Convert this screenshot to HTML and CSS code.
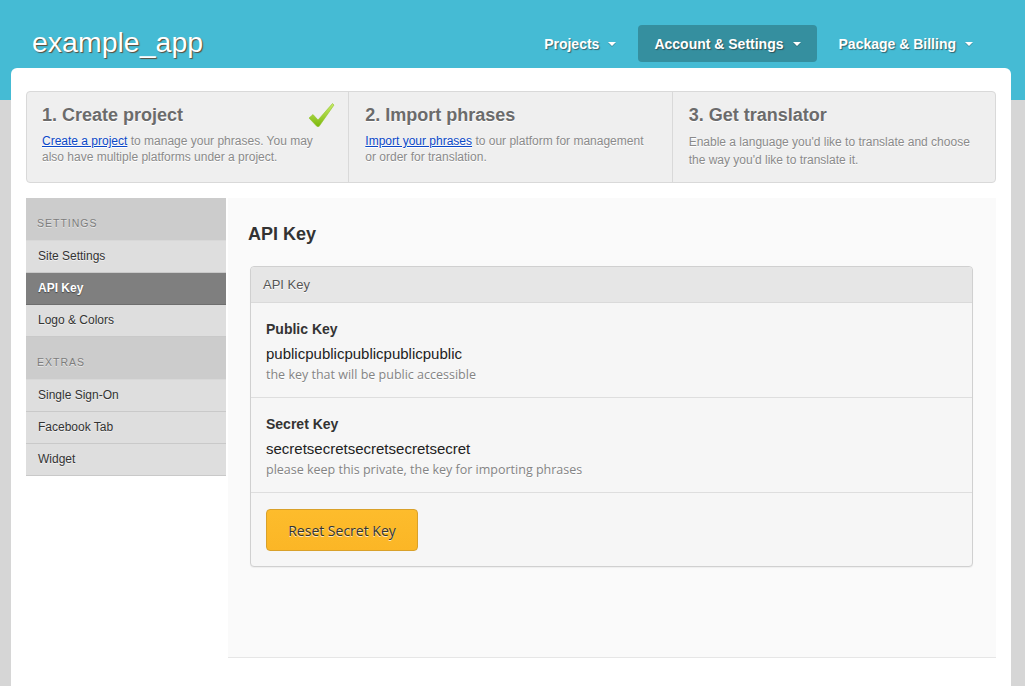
FILE: index.html
```html
<!DOCTYPE html>
<html>
<head>
<meta charset="utf-8">
<title>example_app</title>
<link rel="stylesheet" href="styles.css">
</head>
<body>
<header class="topbar">
  <div class="logo">example_app</div>
  <nav class="nav">
    <a class="nav-item">Projects<span class="caret"></span></a>
    <a class="nav-item active">Account &amp; Settings<span class="caret"></span></a>
    <a class="nav-item">Package &amp; Billing<span class="caret"></span></a>
  </nav>
</header>
<div class="container">
  <div class="steps">
    <div class="step">
      <h2 class="step-title">1. Create project</h2>
      <p class="step-text"><a class="link">Create a project</a> to manage your phrases. You may also have multiple platforms under a project.</p>
      <svg class="check" width="27" height="25" viewBox="0 0 27 25">
        <defs>
          <linearGradient id="g" x1="0" y1="0" x2="0" y2="1">
            <stop offset="0" stop-color="#c9ec6a"/>
            <stop offset="1" stop-color="#7cb80c"/>
          </linearGradient>
        </defs>
        <polygon points="1,15 5,11.5 10,17 24.5,0.5 26,2 11,23.5 9,23.5" fill="url(#g)" stroke="#8fc227" stroke-width="0.6" stroke-linejoin="round"/>
      </svg>
    </div>
    <div class="step">
      <h2 class="step-title">2. Import phrases</h2>
      <p class="step-text"><a class="link">Import your phrases</a> to our platform for management or order for translation.</p>
    </div>
    <div class="step">
      <h2 class="step-title">3. Get translator</h2>
      <p class="step-text step-text-wide">Enable a language you'd like to translate and choose the way you'd like to translate it.</p>
    </div>
  </div>
  <div class="main">
    <aside class="sidebar">
      <div class="side-head">Settings</div>
      <a class="side-item">Site Settings</a>
      <a class="side-item active">API Key</a>
      <a class="side-item">Logo &amp; Colors</a>
      <div class="side-head">Extras</div>
      <a class="side-item">Single Sign-On</a>
      <a class="side-item">Facebook Tab</a>
      <a class="side-item">Widget</a>
    </aside>
    <section class="content">
      <h1 class="page-title">API Key</h1>
      <div class="panel">
        <div class="panel-head">API Key</div>
        <div class="panel-row">
          <div class="key-label">Public Key</div>
          <div class="key-value">publicpublicpublicpublicpublic</div>
          <div class="key-hint">the key that will be public accessible</div>
        </div>
        <div class="panel-row">
          <div class="key-label">Secret Key</div>
          <div class="key-value">secretsecretsecretsecretsecret</div>
          <div class="key-hint">please keep this private, the key for importing phrases</div>
        </div>
        <div class="panel-foot">
          <button class="btn">Reset Secret Key</button>
        </div>
      </div>
    </section>
  </div>
</div>
</body>
</html>
```
FILE: styles.css
```css
html, body {
  margin: 0;
  padding: 0;
}
body {
  font-family: "Liberation Sans", Arial, sans-serif;
  background: linear-gradient(to bottom, #45bbd4 0, #45bbd4 100px, #d6d6d6 100px, #d6d6d6 100%);
  min-height: 686px;
  overflow: hidden;
}
.topbar {
  height: 68px;
  display: flex;
  align-items: flex-start;
}
.logo {
  margin: 26px 0 0 32px;
  font-size: 28.5px;
  line-height: 32px;
  color: #fff;
  text-shadow: 1px 1px 1px #5a4a3a;
}
.nav {
  margin: 25px 36px 0 auto;
  display: flex;
  gap: 6px;
}
.nav-item {
  display: flex;
  align-items: center;
  height: 37px;
  padding: 0 16px;
  border-radius: 4px;
  color: #fff;
  font-weight: bold;
  font-size: 14px;
  text-shadow: 1px 1px 1px rgba(40, 40, 40, 0.6);
}
.nav-item:first-child {
  padding-left: 18px;
}
.nav-item.active {
  background: #358f9f;
}
.caret {
  display: inline-block;
  width: 0;
  height: 0;
  margin-left: 9px;
  border-left: 4px solid transparent;
  border-right: 4px solid transparent;
  border-top: 4px solid #fff;
  filter: drop-shadow(0 1px 0 rgba(40,40,40,0.3));
}
.container {
  margin: 0 14px 0 11px;
  background: #fff;
  border-radius: 6px 6px 0 0;
  padding: 23px 15px 28px;
}
.steps {
  display: flex;
  height: 90px;
  background: #efefef;
  border: 1px solid #d9d9d9;
  border-radius: 4px;
}
.step {
  flex: 1;
  position: relative;
  padding: 12px 16px 0;
  border-left: 1px solid #d9d9d9;
}
.step:first-child {
  border-left: none;
  padding-left: 15px;
}
.step-title {
  margin: 0;
  font-size: 18px;
  line-height: 22px;
  font-weight: bold;
  color: #6b6b6b;
  text-shadow: 0 1px 0 #fff;
}
.step-text {
  margin: 7px 0 0;
  font-size: 12px;
  line-height: 16px;
  color: #8a8a8a;
  text-shadow: 0 1px 0 #fff;
}
.step-text-wide {
  line-height: 18px;
}
.link {
  color: #0b48c8;
  text-decoration: underline;
}
.check {
  position: absolute;
  top: 11px;
  right: 13px;
}
.main {
  display: flex;
  gap: 2px;
  margin-top: 15px;
}
.sidebar {
  width: 200px;
  flex: none;
  align-self: flex-start;
  display: flex;
  flex-direction: column;
}
.side-head {
  height: 25px;
  padding: 17px 0 0 11px;
  line-height: 16px;
  background: #cccccc;
  color: #7d7d7d;
  font-size: 10.5px;
  letter-spacing: 1px;
  text-transform: uppercase;
  text-shadow: 0 1px 0 #e6e6e6;
  border-bottom: 1px solid #d8d8d8;
}
.side-item {
  height: 31px;
  line-height: 31px;
  padding-left: 12px;
  background: #dedede;
  border-bottom: 1px solid #c9c9c9;
  color: #333;
  font-size: 12px;
  text-shadow: 0 1px 0 #f0f0f0;
}
.side-item.active {
  background: #7f7f7f;
  border-bottom-color: #6e6e6e;
  color: #fff;
  font-weight: bold;
  text-shadow: 0 1px 1px #444;
}
.content {
  flex: 1;
  background: #fafafa;
  box-sizing: border-box;
  height: 460px;
  border-bottom: 1px solid #e6e6e6;
  padding: 25px 23px 0 20px;
}
.page-title {
  margin: 0;
  font-size: 18px;
  line-height: 22px;
  font-weight: bold;
  color: #333;
}
.panel {
  margin: 21px 0 0 2px;
  background: #f6f6f6;
  border: 1px solid #d0d0d0;
  border-radius: 4px;
  box-shadow: 0 1px 1px rgba(0,0,0,0.05);
}
.panel-head {
  height: 35px;
  line-height: 35px;
  padding-left: 12px;
  background: #e6e6e6;
  border-bottom: 1px solid #dadada;
  border-radius: 4px 4px 0 0;
  font-size: 13px;
  color: #555;
  text-shadow: 0 1px 0 #fff;
}
.panel-row {
  padding: 17px 15px 14px;
  border-bottom: 1px solid #dedede;
}
.key-label {
  font-size: 14px;
  line-height: 18px;
  font-weight: bold;
  color: #333;
}
.key-value {
  margin-top: 6px;
  font-size: 15px;
  line-height: 20px;
  color: #222;
}
.key-hint {
  margin-top: 3px;
  font-family: "Open Sans", "DejaVu Sans", sans-serif;
  font-size: 12.5px;
  line-height: 16px;
  color: #848484;
  text-shadow: 0 1px 0 #fff;
}
.panel-foot {
  padding: 16px 15px 15px;
}
.btn {
  display: block;
  height: 42px;
  width: 152px;
  padding: 0;
  background: linear-gradient(to bottom, #fdbc2c, #fbb626);
  border: 1px solid #d9a12a;
  border-radius: 4px;
  font-family: "Open Sans", "DejaVu Sans", sans-serif;
  font-size: 14px;
  color: #333;
  text-shadow: 0 1px 0 rgba(255,255,255,0.7);
}
```
